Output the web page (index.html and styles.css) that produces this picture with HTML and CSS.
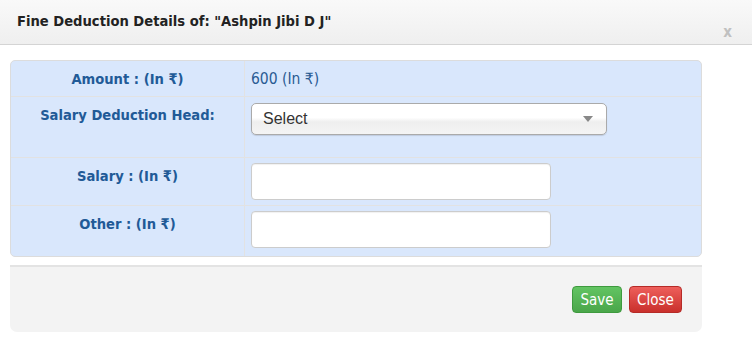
FILE: index.html
```html
<!DOCTYPE html>
<html lang="en">
<head>
    <meta charset="UTF-8">
    <title>Fine Deduction Details</title>
    <link rel="stylesheet" href="styles.css">
</head>
<body>
    <div class="modal-header">
        <h3>Fine Deduction Details of: "Ashpin Jibi D J"</h3>
        <span class="close-x">x</span>
    </div>

    <div class="modal-body">
        <table class="detail-table">
            <tr class="row-amount">
                <th>Amount : (In ₹)</th>
                <td class="value">600 (In ₹)</td>
            </tr>
            <tr class="row-head">
                <th>Salary Deduction Head:</th>
                <td>
                    <div class="select-box">
                        <span>Select</span>
                        <span class="caret"></span>
                    </div>
                </td>
            </tr>
            <tr class="row-input">
                <th>Salary : (In ₹)</th>
                <td><input type="text" class="text-input"></td>
            </tr>
            <tr class="row-input last">
                <th>Other : (In ₹)</th>
                <td><input type="text" class="text-input"></td>
            </tr>
        </table>
    </div>

    <div class="modal-footer">
        <button class="btn btn-save">Save</button>
        <button class="btn btn-close">Close</button>
    </div>
</body>
</html>
```

FILE: styles.css
```css
body {
    margin: 0;
    font-family: "DejaVu Sans Condensed", "DejaVu Sans", sans-serif;
    background: #fff;
    width: 752px;
    height: 351px;
    overflow: hidden;
}
.modal-header {
    height: 44px;
    background: linear-gradient(#f9f9f9, #efefef);
    border-bottom: 1px solid #d4d4d4;
    position: relative;
}
.modal-header h3 {
    margin: 0;
    padding: 12px 0 0 17px;
    font-size: 14.6px;
    font-weight: bold;
    color: #222;
}
.close-x {
    position: absolute;
    right: 20px;
    top: 23px;
    font-size: 15px;
    font-weight: bold;
    color: #c0c0c0;
}
.modal-body {
    padding: 15px 50px 0 10px;
}
.detail-table {
    width: 692px;
    border-collapse: separate;
    border-spacing: 0;
    background: #d9e7fc;
    border: 1px solid #dcdcdc;
    border-radius: 5px;
}
.detail-table th,
.detail-table td {
    border-top: 1px solid #e2e2e2;
    vertical-align: top;
}
.detail-table tr:first-child th,
.detail-table tr:first-child td {
    border-top: none;
}
.detail-table th {
    width: 234px;
    border-right: 1px solid #e2e2e2;
    color: #215a97;
    font-size: 14.6px;
    text-align: center;
    font-weight: bold;
}
.detail-table td {
    padding-left: 6px;
}
.row-amount th,
.row-amount td {
    height: 35px;
    padding-top: 9px;
    box-sizing: border-box;
}
.value {
    color: #2a5b93;
    font-size: 15.5px;
}
.row-head th {
    height: 61px;
    padding-top: 9px;
    box-sizing: border-box;
}
.row-head td {
    padding-top: 6px;
}
.select-box {
    width: 356px;
    height: 32px;
    border: 1px solid #aaa;
    border-radius: 5px;
    background: linear-gradient(#fff 0%, #fff 45%, #eee 60%, #f4f4f4 100%);
    box-shadow: 0 1px 1px rgba(0,0,0,0.12);
    display: flex;
    align-items: center;
    justify-content: space-between;
    padding: 0 13px 0 11px;
    box-sizing: border-box;
    font-family: "Liberation Sans", Arial, sans-serif;
    font-size: 16px;
    color: #333;
}
.caret {
    width: 0;
    height: 0;
    border-left: 5px solid transparent;
    border-right: 5px solid transparent;
    border-top: 6px solid #888;
}
.row-input th {
    height: 48px;
    padding-top: 9px;
    box-sizing: border-box;
}
.row-input td {
    padding-top: 5px;
}
.row-input.last th {
    height: 51px;
}
.text-input {
    width: 300px;
    height: 37px;
    box-sizing: border-box;
    border: 1px solid #ccc;
    border-radius: 4px;
    background: #fff;
    box-shadow: inset 0 1px 1px rgba(0,0,0,0.06);
    margin: 0;
}
.modal-footer {
    margin: 8px 50px 0 10px;
    border-top: 2px solid #e3e3e3;
    background: #f3f3f3;
    height: 67px;
    border-radius: 0 0 7px 7px;
    display: flex;
    justify-content: flex-end;
    align-items: flex-start;
    gap: 7px;
    padding: 19px 20px 0 0;
    box-sizing: border-box;
}
.btn {
    height: 27px;
    padding: 0 6px;
    border-radius: 4px;
    color: #fff;
    font-family: "DejaVu Sans Condensed", "DejaVu Sans", sans-serif;
    font-size: 15px;
    cursor: pointer;
}
.btn-save {
    background: linear-gradient(#62c462, #4aa64a);
    border: 1px solid #3e9a3e;
    width: 50px;
}
.btn-close {
    background: linear-gradient(#ee5f5b, #c9302c);
    border: 1px solid #b52b27;
    width: 53px;
}
```
